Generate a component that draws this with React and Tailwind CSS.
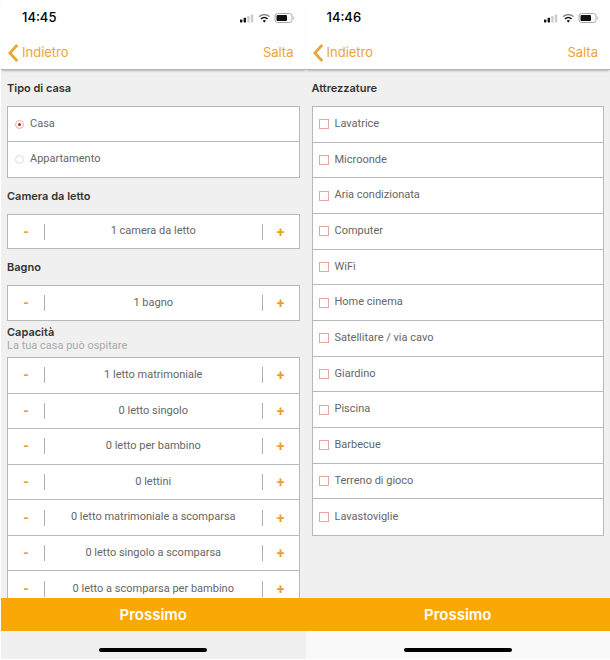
import { useState } from 'react';

const BEDS = [
  { label: 'letto matrimoniale', initial: 1 },
  { label: 'letto singolo', initial: 0 },
  { label: 'letto per bambino', initial: 0 },
  { label: 'lettini', initial: 0 },
  { label: 'letto matrimoniale a scomparsa', initial: 0 },
  { label: 'letto singolo a scomparsa', initial: 0 },
  { label: 'letto a scomparsa per bambino', initial: 0 },
];

const AMENITIES = [
  'Lavatrice',
  'Microonde',
  'Aria condizionata',
  'Computer',
  'WiFi',
  'Home cinema',
  'Satellitare / via cavo',
  'Giardino',
  'Piscina',
  'Barbecue',
  'Terreno di gioco',
  'Lavastoviglie',
];

function StatusIcons() {
  return (
    <svg className="h-3 w-14" viewBox="0 0 56 12" fill="none" aria-hidden="true">
      {/* signal */}
      <rect x="0" y="7.4" width="2.4" height="3" rx="0.6" fill="#111" />
      <rect x="3.6" y="5.8" width="2.4" height="4.6" rx="0.6" fill="#111" />
      <rect x="7.2" y="4" width="2.4" height="6.4" rx="0.6" fill="#ccc" />
      <rect x="10.8" y="2.4" width="2.4" height="8" rx="0.6" fill="#ccc" />
      {/* wifi */}
      <path d="M19 4.6c3-2.6 7.6-2.6 10.6 0" stroke="#777" strokeWidth="1.2" />
      <path d="M21 6.9c1.9-1.6 4.7-1.6 6.6 0" stroke="#111" strokeWidth="1.6" />
      <path d="M22.6 8.7c1-.8 2.4-.8 3.4 0l-1.7 1.8z" fill="#111" />
      {/* battery */}
      <rect x="35" y="1.5" width="17" height="9" rx="2.4" stroke="#aaa" />
      <rect x="36.5" y="3" width="10.5" height="6" rx="1" fill="#111" />
      <path d="M53.4 4.5c1.2.4 1.2 2.6 0 3z" fill="#aaa" />
    </svg>
  );
}

function Phone({ time, homeClass, children }) {
  return (
    <section className="flex min-h-0 min-w-0 flex-col">
      <header className="z-10 border-b border-[#b4b4b4] bg-white shadow-[0_2px_2px_-1px_rgba(0,0,0,0.25)]">
        <div className="flex h-9 items-center justify-between pr-2.5 pl-[21px]">
          <time className="text-[13px] font-medium text-black">{time}</time>
          <StatusIcons />
        </div>
        <nav className="flex h-[33px] items-center justify-between pr-3 pl-[7px] text-[13px] text-[#eba435]">
          <a href="#indietro" className="flex items-center gap-1">
            <svg className="h-[18px] w-2.5" viewBox="0 0 10 18" fill="none" stroke="currentColor" strokeWidth="2.8" aria-hidden="true">
              <path d="M9.2 1L1.8 9L9.2 17" />
            </svg>
            Indietro
          </a>
          <a href="#salta">Salta</a>
        </nav>
      </header>

      <div className="min-h-0 flex-1 overflow-hidden bg-[#f0f0f0] px-1.5">{children}</div>

      <button type="button" className="h-[33px] shrink-0 bg-[#f9a806] pt-0.5 text-[15px] font-semibold text-white">
        Prossimo
      </button>
      <div className={`flex h-7 shrink-0 items-center justify-center pt-2.5 ${homeClass}`}>
        <span className="h-1 w-27 rounded-full bg-black" />
      </div>
    </section>
  );
}

function Heading({ children, hint }) {
  return (
    <div className="flex h-9 flex-col justify-center text-[11px] leading-[13px]">
      <h2 className="font-semibold text-[#333]">{children}</h2>
      {hint && <p className="font-[Roboto,sans-serif] text-[#aaa]">{hint}</p>}
    </div>
  );
}

function Panel({ className, children }) {
  return (
    <div className={`grid auto-rows-fr divide-y divide-[#b8b8b8] border border-[#b8b8b8] bg-white font-[Roboto,sans-serif] text-[11px] text-[#666] ${className}`}>
      {children}
    </div>
  );
}

function Stepper({ label, initial }) {
  const [count, setCount] = useState(initial);

  return (
    <div className="flex items-center">
      <button
        type="button"
        aria-label={`Meno ${label}`}
        className="h-4 w-[37px] border-r border-[#b0b0b0] text-sm leading-4 font-bold text-[#e9a12c]"
        onClick={() => setCount(Math.max(0, count - 1))}
      >
        -
      </button>
      <output className="flex-1 text-center">{count} {label}</output>
      <button
        type="button"
        aria-label={`Più ${label}`}
        className="h-4 w-[37px] border-l border-[#b0b0b0] text-sm leading-4 font-bold text-[#e9a12c]"
        onClick={() => setCount(count + 1)}
      >
        +
      </button>
    </div>
  );
}

function HomeType() {
  const [type, setType] = useState('Casa');

  return (
    <Panel className="h-[72px]">
      {['Casa', 'Appartamento'].map((name) => (
        <label key={name} className="flex items-center gap-1.5 pl-[7px]">
          <input
            type="radio"
            name="tipo"
            checked={type === name}
            onChange={() => setType(name)}
            className="size-[9px] appearance-none rounded-full border border-[#dcdcdc] bg-white checked:border-[#f3aaa6] checked:bg-[#b3261e] checked:bg-clip-content checked:p-[2px]"
          />
          {name}
        </label>
      ))}
    </Panel>
  );
}

export default function App() {
  return (
    <main className="grid h-screen grid-cols-2 bg-white pb-px pl-px font-['Inter',sans-serif]">
      <Phone time="14:45" homeClass="bg-[#f0f0f0]">
        <Heading>Tipo di casa</Heading>
        <HomeType />
        <Heading>Camera da letto</Heading>
        <Panel className="h-[35px]">
          <Stepper label="camera da letto" initial={1} />
        </Panel>
        <Heading>Bagno</Heading>
        <Panel className="h-9">
          <Stepper label="bagno" initial={1} />
        </Panel>
        <Heading hint="La tua casa può ospitare">Capacità</Heading>
        <Panel className="h-[251px]">
          {BEDS.map((bed) => (
            <Stepper key={bed.label} {...bed} />
          ))}
        </Panel>
      </Phone>

      <Phone time="14:46" homeClass="bg-[#f9f9f9]">
        <Heading>Attrezzature</Heading>
        <Panel className="h-[430px]">
          {AMENITIES.map((name) => (
            <label key={name} className="flex items-center gap-1.5 pl-1.5">
              <input
                type="checkbox"
                className="size-2.5 appearance-none border border-[#eda39d] bg-white checked:bg-[#eda39d]"
              />
              {name}
            </label>
          ))}
        </Panel>
      </Phone>
    </main>
  );
}
